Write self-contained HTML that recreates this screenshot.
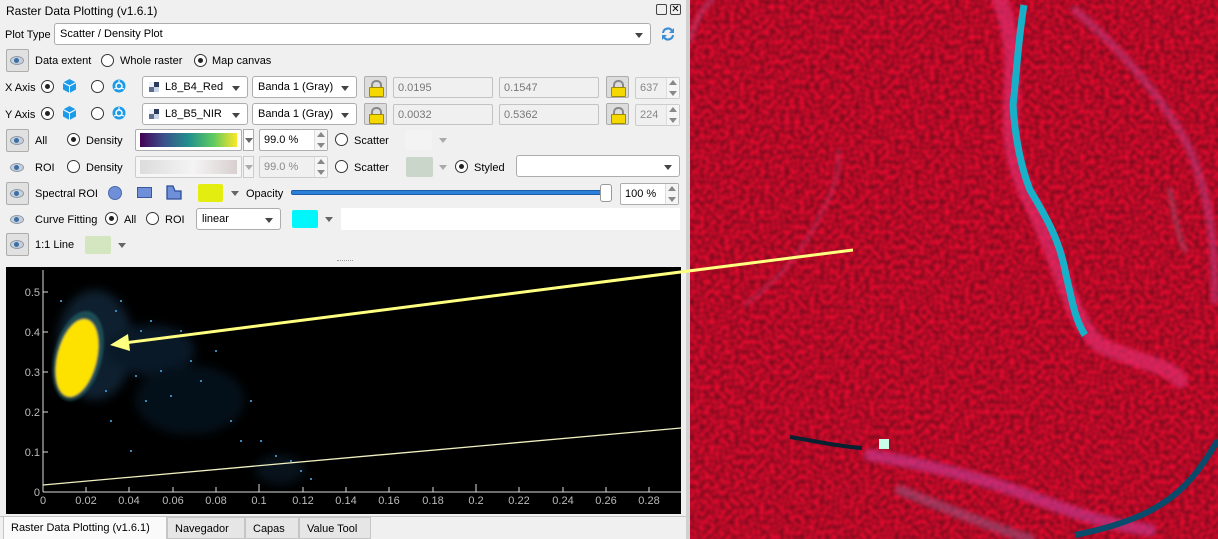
<!DOCTYPE html>
<html><head><meta charset="utf-8">
<style>
*{box-sizing:border-box;margin:0;padding:0}
body{width:1218px;height:539px;overflow:hidden;background:#f0f0f0;font-family:"Liberation Sans",sans-serif;font-size:11px;color:#000;position:relative}
.a{position:absolute;white-space:nowrap}
.t{position:absolute;line-height:14px;white-space:nowrap}
.combo{position:absolute;background:#fff;border:1px solid #adadad;border-radius:3px;height:22px;padding:4px 0 0 5px;line-height:13px}
.combo:after{content:"";position:absolute;right:7px;top:9px;border:4px solid transparent;border-top:5px solid #444;border-bottom:0}
.in{position:absolute;background:#f0f0f0;border:1px solid #c3c3c3;border-radius:2px;height:21px;padding:4px 0 0 4px;color:#777;line-height:13px}
.spin{position:absolute;background:#fff;border:1px solid #adadad;border-radius:2px;height:22px;padding:4px 0 0 4px;line-height:13px}
.spin.g{background:#f0f0f0;color:#888;border-color:#ccc}
.spin:after{content:"";position:absolute;right:0;top:0;width:12px;height:100%;border-left:1px solid #ddd;background:#f5f5f5}
.spin i{position:absolute;right:2px;width:0;height:0;border:4px solid transparent;z-index:2}
.spin i.u{top:2px;border-bottom:5px solid #888;border-top:0}
.spin i.d{bottom:2px;border-top:5px solid #888;border-bottom:0}
.btn{position:absolute;width:23px;height:23px;border:1px solid #adadad;border-radius:2px;background:#e1e1e1}
.eye{position:absolute;width:14px;height:9px;border-radius:50%;background:#c7cfd8;border:1px solid #8a98a8}
.eye:after{content:"";position:absolute;left:3px;top:1px;width:5px;height:5px;border-radius:50%;background:#3c6fa6}
.rad{position:absolute;width:13px;height:13px;border:1px solid #333;border-radius:50%;background:#fff}
.rad.on:after{content:"";position:absolute;left:3px;top:3px;width:5px;height:5px;border-radius:50%;background:#222}
.arr{position:absolute;border:4px solid transparent;border-top:5px solid #666;border-bottom:0;width:0;height:0}
.lock{position:absolute;width:23px;height:22px;border:1px solid #adadad;border-radius:2px;background:#dcdcdc}
.lock:before{content:"";position:absolute;left:6px;top:3px;width:7px;height:7px;border:2px solid #888;border-bottom:0;border-radius:5px 5px 0 0}
.lock:after{content:"";position:absolute;left:4px;top:10px;width:13px;height:8px;background:#f5d800;border:1px solid #a08a00;border-radius:1px}
.tab{position:absolute;top:517px;height:22px;border:1px solid #c5c5c5;background:#e6e6e6;padding:5px 0 0 7px}
</style></head><body>

<div class="t" style="left:6px;top:4px;font-size:12px">Raster Data Plotting (v1.6.1)</div>
<div class="a" style="left:656px;top:4px;width:11px;height:11px;border:1px solid #444;border-radius:2px"></div>
<div class="a" style="left:670px;top:4px;width:11px;height:11px;border:1px solid #444;border-radius:2px;font-size:10px;line-height:9px;text-align:center">✕</div>

<div class="t" style="left:5px;top:28px">Plot Type</div>
<div class="combo" style="left:54px;top:23px;width:597px">Scatter / Density Plot</div>
<svg class="a" style="left:659px;top:25px" width="18" height="18" viewBox="0 0 18 18"><path d="M3 8a6 6 0 0 1 10.5-3.5L15 3v5h-5l2-2A4 4 0 0 0 5 8z" fill="#3a8dd6"/><path d="M15 10a6 6 0 0 1-10.5 3.5L3 15v-5h5l-2 2a4 4 0 0 0 7-2z" fill="#3a8dd6"/></svg>

<div class="btn" style="left:6px;top:49px"></div><div class="eye" style="left:10px;top:56px"></div>
<div class="t" style="left:35px;top:54px">Data extent</div>
<div class="rad" style="left:101px;top:54px"></div><div class="t" style="left:120px;top:54px">Whole raster</div>
<div class="rad on" style="left:194px;top:54px"></div><div class="t" style="left:212px;top:54px">Map canvas</div>

<div class="t" style="left:5px;top:81px">X Axis</div>
<div class="rad on" style="left:41px;top:80px"></div>
<svg class="a" style="left:63px;top:79px" width="13" height="14"><path d="M6.5 0L13 3.5V10.5L6.5 14L0 10.5V3.5z" fill="#1e9be8"/><path d="M0 3.5L6.5 7L13 3.5M6.5 7V14" stroke="#fff" stroke-width="1" fill="none"/></svg>
<div class="rad" style="left:91px;top:80px"></div>
<svg class="a" style="left:112px;top:79px" width="14" height="14"><circle cx="7" cy="7" r="6.5" fill="#1e9be8"/><circle cx="7" cy="7" r="3" fill="none" stroke="#fff" stroke-width="1.5"/><path d="M7 1v3M12 10l-3-1M2 10l3-1" stroke="#fff"/></svg>
<div class="combo" style="left:142px;top:76px;width:106px;padding-left:22px">L8_B4_Red</div>
<div class="a" style="left:149px;top:82px;width:10px;height:10px;background:conic-gradient(#2a3a5a 0 25%,#c9d5e5 0 50%,#5a6e90 0 75%,#eef2f8 0)"></div>
<div class="combo" style="left:252px;top:76px;width:105px">Banda 1 (Gray)</div>
<div class="lock" style="left:364px;top:76px"></div>
<div class="in" style="left:393px;top:77px;width:100px">0.0195</div>
<div class="in" style="left:499px;top:77px;width:100px">0.1547</div>
<div class="lock" style="left:606px;top:76px"></div>
<div class="spin g" style="left:635px;top:77px;width:45px">637<i class="u"></i><i class="d"></i></div>

<div class="t" style="left:5px;top:108px">Y Axis</div>
<div class="rad on" style="left:41px;top:107px"></div>
<svg class="a" style="left:63px;top:106px" width="13" height="14"><path d="M6.5 0L13 3.5V10.5L6.5 14L0 10.5V3.5z" fill="#1e9be8"/><path d="M0 3.5L6.5 7L13 3.5M6.5 7V14" stroke="#fff" stroke-width="1" fill="none"/></svg>
<div class="rad" style="left:91px;top:107px"></div>
<svg class="a" style="left:112px;top:106px" width="14" height="14"><circle cx="7" cy="7" r="6.5" fill="#1e9be8"/><circle cx="7" cy="7" r="3" fill="none" stroke="#fff" stroke-width="1.5"/><path d="M7 1v3M12 10l-3-1M2 10l3-1" stroke="#fff"/></svg>
<div class="combo" style="left:142px;top:103px;width:106px;padding-left:22px">L8_B5_NIR</div>
<div class="a" style="left:149px;top:109px;width:10px;height:10px;background:conic-gradient(#2a3a5a 0 25%,#c9d5e5 0 50%,#5a6e90 0 75%,#eef2f8 0)"></div>
<div class="combo" style="left:252px;top:103px;width:105px">Banda 1 (Gray)</div>
<div class="lock" style="left:364px;top:103px"></div>
<div class="in" style="left:393px;top:104px;width:100px">0.0032</div>
<div class="in" style="left:499px;top:104px;width:100px">0.5362</div>
<div class="lock" style="left:606px;top:103px"></div>
<div class="spin g" style="left:635px;top:104px;width:45px">224<i class="u"></i><i class="d"></i></div>

<div class="btn" style="left:6px;top:129px"></div><div class="eye" style="left:10px;top:136px"></div>
<div class="t" style="left:35px;top:134px">All</div>
<div class="rad on" style="left:67px;top:133px"></div><div class="t" style="left:86px;top:134px">Density</div>
<div class="a" style="left:135px;top:129px;width:107px;height:22px;border:1px solid #adadad;border-radius:2px;background:#fff;padding:3px 4px"><div style="width:100%;height:100%;background:linear-gradient(90deg,#440154,#3b528b,#21908d,#5dc963,#fde725)"></div></div>
<div class="a" style="left:243px;top:129px;width:11px;height:22px;border:1px solid #adadad;background:#fff"></div><div class="arr" style="left:245px;top:138px"></div>
<div class="spin" style="left:259px;top:129px;width:69px">99.0 %<i class="u"></i><i class="d"></i></div>
<div class="rad" style="left:335px;top:133px"></div><div class="t" style="left:354px;top:134px">Scatter</div>
<div class="a" style="left:405px;top:130px;width:27px;height:20px;background:#f3f3f3;border-radius:2px"></div>
<div class="arr" style="left:439px;top:138px;border-top-color:#aaa"></div>

<div class="eye" style="left:10px;top:163px"></div>
<div class="t" style="left:35px;top:161px">ROI</div>
<div class="rad" style="left:67px;top:160px"></div><div class="t" style="left:86px;top:161px">Density</div>
<div class="a" style="left:135px;top:156px;width:107px;height:22px;border:1px solid #ccc;border-radius:2px;background:#f6f6f6;padding:3px 4px"><div style="width:100%;height:100%;background:linear-gradient(90deg,#dcdcdc,#f4f4f4 55%,#d9cfcf)"></div></div>
<div class="a" style="left:243px;top:156px;width:11px;height:22px;border:1px solid #ccc;background:#f4f4f4"></div><div class="arr" style="left:245px;top:165px;border-top-color:#aaa"></div>
<div class="spin g" style="left:259px;top:156px;width:69px">99.0 %<i class="u"></i><i class="d"></i></div>
<div class="rad" style="left:335px;top:160px"></div><div class="t" style="left:354px;top:161px">Scatter</div>
<div class="a" style="left:406px;top:157px;width:27px;height:20px;background:#c9d6c9;border-radius:2px"></div>
<div class="arr" style="left:439px;top:165px;border-top-color:#aaa"></div>
<div class="rad on" style="left:455px;top:160px"></div><div class="t" style="left:474px;top:161px">Styled</div>
<div class="combo" style="left:516px;top:155px;width:164px"></div>

<div class="btn" style="left:6px;top:182px"></div><div class="eye" style="left:10px;top:189px"></div>
<div class="t" style="left:35px;top:187px">Spectral ROI</div>
<div class="a" style="left:108px;top:186px;width:14px;height:14px;border-radius:50%;background:#6f8fd8;border:1px solid #4a68b0"></div>
<div class="a" style="left:137px;top:187px;width:15px;height:11px;background:#6f8fd8;border:1px solid #3a58a0"></div>
<svg class="a" style="left:166px;top:185px" width="16" height="15"><path d="M1 1H7L9 6H15V14H1Z" fill="#6f8fd8" stroke="#2d4e9a" stroke-width="1.3"/></svg>
<div class="a" style="left:198px;top:184px;width:25px;height:18px;background:#e3ee10;border-radius:2px"></div>
<div class="arr" style="left:231px;top:191px"></div>
<div class="t" style="left:246px;top:187px">Opacity</div>
<div class="a" style="left:291px;top:190px;width:318px;height:5px;background:#2b7fd8;border:1px solid #1b5fa8;border-radius:2px"></div>
<div class="a" style="left:600px;top:184px;width:12px;height:18px;background:#fff;border:1px solid #999;border-radius:3px"></div>
<div class="spin" style="left:620px;top:183px;width:59px">100 %<i class="u"></i><i class="d"></i></div>

<div class="eye" style="left:10px;top:215px"></div>
<div class="t" style="left:35px;top:213px">Curve Fitting</div>
<div class="rad on" style="left:105px;top:212px"></div><div class="t" style="left:124px;top:213px">All</div>
<div class="rad" style="left:146px;top:212px"></div><div class="t" style="left:165px;top:213px">ROI</div>
<div class="combo" style="left:196px;top:208px;width:85px">linear</div>
<div class="a" style="left:292px;top:210px;width:26px;height:18px;background:#00f6fa;border-radius:2px"></div>
<div class="arr" style="left:325px;top:217px"></div>
<div class="a" style="left:341px;top:208px;width:339px;height:22px;background:#fff"></div>

<div class="btn" style="left:6px;top:233px"></div><div class="eye" style="left:10px;top:240px"></div>
<div class="t" style="left:35px;top:238px">1:1 Line</div>
<div class="a" style="left:85px;top:236px;width:26px;height:18px;background:#d4e6c0;border-radius:2px"></div>
<div class="arr" style="left:118px;top:243px"></div>
<div class="a" style="left:337px;top:260px;width:16px;height:2px;border-top:1px dotted #999"></div>

<svg class="a" style="left:6px;top:267px" width="675" height="247" viewBox="6 267 675 247">
<rect x="6" y="267" width="675" height="247" fill="#000"/>
<defs><filter id="bl"><feGaussianBlur stdDeviation="5"/></filter><filter id="b2"><feGaussianBlur stdDeviation="1"/></filter></defs>
<g filter="url(#bl)" opacity="0.35">
<ellipse cx="95" cy="345" rx="38" ry="55" fill="#2a5d8a"/>
<ellipse cx="150" cy="350" rx="45" ry="25" fill="#1d4a72"/>
<ellipse cx="190" cy="400" rx="55" ry="35" fill="#102e4a"/>
<ellipse cx="280" cy="470" rx="25" ry="15" fill="#12354e"/>
</g>
<g filter="url(#b2)">
<ellipse cx="78" cy="356" rx="24" ry="46" transform="rotate(14 78 356)" fill="#2a7a7a" opacity="0.5"/>
<ellipse cx="77" cy="358" rx="20" ry="40" transform="rotate(14 77 358)" fill="#fde200"/>
</g>
<g fill="#3a88b8">
<rect x="120" y="300" width="2" height="2"/><rect x="140" y="330" width="2" height="2"/><rect x="160" y="370" width="2" height="2"/><rect x="200" y="380" width="2" height="2"/><rect x="230" y="420" width="2" height="2"/><rect x="260" y="440" width="2" height="2"/><rect x="290" y="460" width="2" height="2"/><rect x="300" y="470" width="2" height="2"/><rect x="110" y="420" width="2" height="2"/><rect x="180" y="330" width="2" height="2"/><rect x="170" y="395" width="2" height="2"/><rect x="215" y="350" width="2" height="2"/><rect x="60" y="300" width="2" height="2"/><rect x="130" y="450" width="2" height="2"/><rect x="250" y="400" width="2" height="2"/><rect x="125" y="345" width="2" height="2"/><rect x="135" y="375" width="2" height="2"/><rect x="150" y="320" width="2" height="2"/><rect x="105" y="390" width="2" height="2"/><rect x="190" y="360" width="2" height="2"/><rect x="115" y="310" width="2" height="2"/><rect x="145" y="400" width="2" height="2"/><rect x="275" y="455" width="2" height="2"/><rect x="310" y="478" width="2" height="2"/><rect x="240" y="440" width="2" height="2"/>
</g>
<line x1="43" y1="270" x2="43" y2="492" stroke="#ddd"/>
<line x1="43" y1="492" x2="681" y2="492" stroke="#ddd"/>
<line x1="43" y1="485" x2="681" y2="428" stroke="#f0f0c0" stroke-width="1.3"/>
<g stroke="#ddd"><path d="M86 492v-5M129 492v-5M173 492v-5M216 492v-5M259 492v-8M303 492v-5M346 492v-5M389 492v-5M433 492v-5M476 492v-8M519 492v-5M563 492v-5M606 492v-5M649 492v-5M43 452h5M43 412h5M43 372h5M43 332h5M43 292h5"/></g>
<g fill="#bbb" font-family="Liberation Sans" font-size="11" text-anchor="end">
<text x="40" y="296">0.5</text><text x="40" y="336">0.4</text><text x="40" y="376">0.3</text><text x="40" y="416">0.2</text><text x="40" y="456">0.1</text><text x="40" y="496">0</text></g>
<g fill="#bbb" font-family="Liberation Sans" font-size="11" text-anchor="middle">
<text x="43" y="504">0</text><text x="86" y="504">0.02</text><text x="129" y="504">0.04</text><text x="173" y="504">0.06</text><text x="216" y="504">0.08</text><text x="259" y="504">0.1</text><text x="303" y="504">0.12</text><text x="346" y="504">0.14</text><text x="389" y="504">0.16</text><text x="433" y="504">0.18</text><text x="476" y="504">0.2</text><text x="519" y="504">0.22</text><text x="563" y="504">0.24</text><text x="606" y="504">0.26</text><text x="649" y="504">0.28</text></g>
</svg>

<div class="a" style="left:0;top:516px;width:686px;height:1px;background:#c5c5c5"></div>
<div class="tab" style="left:3px;width:164px;background:#fafafa;border-bottom:0;top:516px;height:23px">Raster Data Plotting (v1.6.1)</div>
<div class="tab" style="left:167px;width:78px">Navegador</div>
<div class="tab" style="left:245px;width:54px">Capas</div>
<div class="tab" style="left:299px;width:72px">Value Tool</div>

<div class="a" style="left:686px;top:0;width:4px;height:539px;background:#d0d0d0"></div>
<svg class="a" style="left:690px;top:0" width="528" height="539" viewBox="690 0 528 539">
<defs>
<filter id="n" x="0" y="0" width="100%" height="100%" color-interpolation-filters="sRGB"><feTurbulence type="fractalNoise" baseFrequency="0.2" numOctaves="1" seed="5"/><feColorMatrix values="0.6 0 0 0 0.4  0 0 0 0 0.04  0.1 0 0 0 0.1  0 0 0 0 1"/></filter>
<filter id="sb"><feGaussianBlur stdDeviation="2"/></filter>
</defs>
<rect x="690" y="0" width="528" height="539" filter="url(#n)"/>
<g fill="none" filter="url(#sb)" stroke-linecap="round">
<path d="M1000 0C1030 80 990 120 1030 200C1060 260 1070 320 1100 345C1130 360 1170 365 1180 380" stroke="#e83078" stroke-width="16" opacity=".6"/>
<path d="M1075 10C1110 40 1160 90 1190 150C1210 200 1215 240 1215 300" stroke="#c04a9a" stroke-width="8" opacity=".45"/>
<path d="M870 455C930 465 990 480 1040 500C1080 515 1110 525 1150 530" stroke="#c83c9a" stroke-width="12" opacity=".6"/>
<path d="M900 490C950 510 1000 530 1030 539" stroke="#906090" stroke-width="10" opacity=".5"/>
<path d="M745 305C770 285 800 260 820 215C835 190 840 170 838 150" stroke="#c0508e" stroke-width="3" opacity=".45"/>
<path d="M690 40C695 20 705 5 712 0" stroke="#c0508e" stroke-width="5" opacity=".5"/>
<path d="M1170 190C1175 220 1180 240 1185 250" stroke="#9a7090" stroke-width="5" opacity=".4"/>
</g>
<path d="M1024 5C1018 40 1016 80 1013 105C1015 140 1022 170 1030 190C1045 215 1060 240 1066 275C1072 300 1075 320 1085 335" stroke="#18b0c8" stroke-width="7" fill="none"/>
<path d="M1218 440C1200 470 1185 490 1160 505C1140 518 1110 528 1075 535" stroke="#0a4a6a" stroke-width="6" fill="none"/>
<path d="M790 437C810 440 835 446 862 448" stroke="#082030" stroke-width="4" fill="none"/>
<rect x="879" y="439" width="10" height="10" fill="#c8ffe8"/>
</svg>

<svg class="a" style="left:0;top:0" width="1218" height="539">
<line x1="853" y1="250" x2="124" y2="343" stroke="#ffff80" stroke-width="3"/>
<path d="M110 345L128 334L130 351Z" fill="#ffff80"/>
</svg>
</body></html>
